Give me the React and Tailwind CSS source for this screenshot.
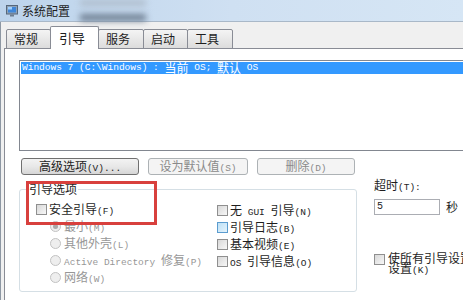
import React from 'react';

const CJK = /([\u2E80-\u9FFF\uFF00-\uFFEF\u3000-\u303F]+)/;

// SimSun-style mixed text: CJK runs at 12px, latin runs in a narrow monospace
const Mx = ({ s }) =>
  s.split(CJK).filter(Boolean).map((p, i) =>
    CJK.test(p)
      ? <span key={i} className="font-['Noto_Sans_CJK_SC',sans-serif] text-[12px]">{p}</span>
      : <span key={i} className="font-['Liberation_Mono',monospace] text-[9.5px] whitespace-pre">{p}</span>
  );

const Check = ({ hot }) => (
  <div className={`w-[11px] h-[11px] shrink-0 border ${hot ? 'border-[#5b9ccf] bg-linear-to-br from-[#bfe1f6] to-[#e4f3fc]' : 'border-[#8f8f8f] bg-linear-to-br from-[#d8d8d8] to-[#f7f7f7]'}`} />
);

const Radio = ({ on }) => (
  <div className="w-[11px] h-[11px] shrink-0 rounded-full border border-[#c2c2c2] bg-[#eeeeee] flex items-center justify-center">
    {on && <div className="w-[5px] h-[5px] rounded-full bg-[#a9a9a9]" />}
  </div>
);

const Tab = ({ label, active, w }) => (
  <div
    className={`-ml-px first:ml-0 flex items-center shrink-0 border border-[#898c95] rounded-t-[2px] text-[#1e1e1e] font-['Noto_Sans_CJK_SC',sans-serif] ${
      active ? 'relative z-10 h-[23px] bg-white border-b-0 pl-[8px] text-[13px]' : 'h-[20px] bg-linear-to-b from-[#f4f4f4] to-[#dcdcdc] pl-[7px] text-[12px]'
    }`}
    style={{ width: w }}
  >
    {label}
  </div>
);

export default function App() {
  return (
    <div className="relative w-[463px] h-[300px] overflow-hidden bg-[#f0f0f0] leading-[12px] text-[#1e1e1e]">
      {/* title bar */}
      <div className="h-[22px] flex items-center bg-linear-to-r from-[#bcd3eb] via-[#cfe0f2] to-[#d6e6f5] border-b border-[#a9b8c8]">
        <svg width="12" height="12" viewBox="0 0 12 12" className="ml-[6px]">
          <rect x="0.5" y="0.5" width="11" height="8.5" fill="#8fa2b6" stroke="#56677a" />
          <rect x="2" y="2" width="8" height="5.5" fill="#3f86d8" />
          <rect x="2" y="2" width="4" height="2.5" fill="#9fd0ff" />
          <rect x="4" y="9.5" width="4" height="2" fill="#6c7d90" />
        </svg>
        <span className="ml-[4px] font-['Noto_Sans_CJK_SC',sans-serif] text-[12px]">系统配置</span>
        <div className="ml-[10px] w-[66px] h-[21px] flex flex-col justify-between">
          <div className="h-[6px] bg-[#aebccb] blur-[3px]" />
          <div className="h-[7px] bg-[#6f7f92] blur-[3px]" />
        </div>
      </div>

      {/* body */}
      <div className="flex h-[278px]">
        <div className="w-[3px] bg-linear-to-b from-[#d3e0ec] via-[#cd8aa0] to-[#98588a] border-r border-[#8d97a3]" />
        <div className="flex-1 flex flex-col pl-[3px] pt-[4px]">
          <div className="flex items-end ml-[2px] h-[23px] relative z-10 -mb-px">
            <Tab label="常规" w={45} />
            <Tab label="引导" w={49} active />
            <Tab label="服务" w={46} />
            <Tab label="启动" w={45} />
            <Tab label="工具" w={46} />
          </div>

          {/* tab page */}
          <div className="flex-1 bg-white border-l border-t border-[#898c95] pl-[14px] pt-[11px]">
            <div className="w-[460px] h-[91px] border border-[#828790] bg-white p-px">
              <div className="h-[12px] bg-[#3399ff] text-white flex items-center pl-px whitespace-nowrap">
                <Mx s="Windows 7 (C:\Windows) : 当前 OS; 默认 OS" />
              </div>
            </div>

            <div className="flex gap-[9px] pl-[2px] mt-[7px]">
              <div className="w-[118px] h-[17px] border border-[#707070] rounded-[3px] bg-linear-to-b from-[#f3f3f3] via-[#e8e8e8] to-[#d6d6d6] flex items-center justify-center">
                <span><Mx s="高级选项(V)..." /></span>
              </div>
              <div className="w-[100px] h-[17px] border border-[#adb2b5] rounded-[3px] bg-[#f4f4f4] text-[#8a8a8a] flex items-center justify-center">
                <span><Mx s="设为默认值(S)" /></span>
              </div>
              <div className="w-[98px] h-[17px] border border-[#adb2b5] rounded-[3px] bg-[#f4f4f4] text-[#8a8a8a] flex items-center justify-center">
                <span><Mx s="删除(D)" /></span>
              </div>
            </div>

            <div className="flex">
              {/* group box */}
              <div className="relative mt-[14px] w-[338px] h-[103px] border border-[#d5dfe5] rounded-[3px] flex pt-[11px]">
                <span className="absolute top-[-7px] left-[8px] bg-white px-px font-['Noto_Sans_CJK_SC',sans-serif] text-[12px]">引导选项</span>
                <div className="w-[197px] pl-[16px] flex flex-col">
                  <div className="h-[17px] flex items-center gap-[2px]"><Check /><span><Mx s="安全引导(F)" /></span></div>
                  {[['最小(M)', true], ['其他外壳(L)'], ['Active Directory 修复(P)'], ['网络(W)']].map(([t, on]) => (
                    <div key={t} className="h-[17px] flex items-center gap-[3px] pl-[14px] text-[#979797] whitespace-nowrap">
                      <Radio on={on} /><span><Mx s={t} /></span>
                    </div>
                  ))}
                </div>
                <div className="flex flex-col pt-px">
                  {[['无 GUI 引导(N)'], ['引导日志(B)', true], ['基本视频(E)'], ['OS 引导信息(O)']].map(([t, hot]) => (
                    <div key={t} className="h-[17px] flex items-center gap-[2px] whitespace-nowrap">
                      <Check hot={hot} /><span><Mx s={t} /></span>
                    </div>
                  ))}
                </div>
              </div>

              {/* timeout column */}
              <div className="ml-[17px] mt-[5px] flex flex-col">
                <span className="h-[12px] flex items-center"><span><Mx s="超时(T):" /></span></span>
                <div className="mt-[7px] flex items-center">
                  <div className="w-[66px] h-[16px] border border-[#abadb3] bg-white pl-[2px] flex items-center font-['Liberation_Mono',monospace] text-[10px]">5</div>
                  <span className="ml-[6px] font-['Noto_Sans_CJK_SC',sans-serif] text-[12px]">秒</span>
                </div>
                <div className="mt-[38px] flex items-start gap-[3px]">
                  <div className="mt-px"><Check /></div>
                  <div className="w-[140px] leading-[10px] font-['Noto_Sans_CJK_SC',sans-serif] text-[12px]">
                    <Mx s="使所有引导设置成为永久设置(K)" />
                  </div>
                </div>
              </div>
            </div>
          </div>
        </div>
      </div>

      {/* red annotation box */}
      <div className="absolute left-[26px] top-[181px] w-[131px] h-[44px] border-[3px] border-[#d8403d]" />
    </div>
  );
}
